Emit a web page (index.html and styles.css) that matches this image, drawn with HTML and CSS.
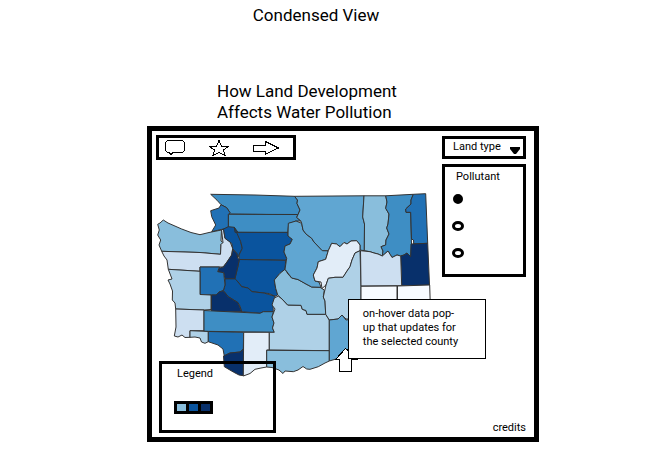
FILE: index.html
```html
<!DOCTYPE html>
<html lang="en">
<head>
<meta charset="utf-8">
<title>Condensed View</title>
<link rel="stylesheet" href="styles.css">
</head>
<body>
<header class="page-title">Condensed View</header>
<main class="page">
  <h1 class="heading">How Land Development<br>Affects Water Pollution</h1>
  <section class="frame">
    <div class="main">
      <nav class="toolbar">
        <button class="tool" type="button" aria-label="Comment"><svg width="20" height="16" viewBox="0 0 20 16"><path d="M2.5.5h15l2 2v8l-2 2H8l-2 2-2-2H2.500l-2-2v-8z"/></svg></button>
        <button class="tool" type="button" aria-label="Favorite"><svg width="20" height="16" viewBox="0 0 20 16"><path d="M10 .5 12.500 6.500H19.500L14.500 10l1.500 5.500-6-3-6 3L5.500 10 .5 6.500h7z"/></svg></button>
        <button class="tool" type="button" aria-label="Share"><svg width="27" height="14" viewBox="0 0 27 14"><path d="M.5 4.500h12v-4l13 6.500-13 6v-3H.5z"/></svg></button>
      </nav>
      <div class="map-area">
        <svg class="map" viewBox="156 192 276 186" role="img" aria-label="Counties map">
          <g class="counties">
            <path class="c6" d="M210.700 194.300 255 195l39.500 1.300 3 3.700-.5 3.500 3 6.500-2 4.500-30 0-39.500-.5 1.500-1.300-3.300-5-5.700-3-4-4.500z"/>
            <path class="c6" d="M228.500 214.300 297.700 214.500l-1 3 4 3.500-5 0-2 1-5 1.500-1 9.200-53.200-.4-6.200-5.600z"/>
            <path class="c7" d="M221 204.700 226.700 207.700 230 212.700 228.300 214.500V228L223.300 229 211.700 231.700 215.700 225 211.700 216.700 210.700 210.700 219 208z"/>
            <path class="c4" d="M163.300 220 168 223 181.700 229 191 232.500 200 234.700 209 232.500 221.500 230 221 241 223 242.500 221 244.500 220.500 254.300 200 252.500 161.700 251.300 159 245 160.700 240 157.700 235 159.300 230 157.700 224.300 160 223z"/>
            <path class="c2" d="M161.700 251.300 200 252.500 220.500 254.300 221 244.500 223 242.500 221.500 230 223.500 229 225 238.300 230 241.700 232.700 248.300 231.700 255 227 262 223 267H200V271.300L168.300 269.300 167 260 164 256z"/>
            <path class="c8" d="M223.500 229 228.300 226.700 234.300 227.300 240 235 240.700 241.700 242.300 248.300 239 255 237.700 258 236.700 253.300 232.700 248.700 231.700 243.300 225 238.300z"/>
            <path class="c8" d="M234.300 227.300 235 232.300H287.700L288 236 292.300 239.300 290 244 285 246 284 252 286.700 258.300 285.700 260.300 239.300 259.500 239 255 242.300 248.300 240.700 241.700z"/>
            <path class="c8" d="M239.300 259.500 285.700 260.300 285 269.300 280 273.300 274.300 280 275.700 288.300 277.700 295 275 296.300 269 293.500 264 293 252 291.700 248 288 241.700 286.700 238 282 234 281 235 278 238 266z"/>
            <path class="c8" d="M225 278.700H235L238 282 241.700 286.700 248 288 252 291.700 264 293 275 296.300 273 304 273.300 311.700H263.300L260 313.300 241.700 311.700 240 306 238 302.700 228.300 296.700 223.300 290.700 225 285z"/>
            <path class="c9" d="M232.700 249.300 236.700 253.300 237.700 258 239.300 259.500 238 266 235 278.700H225L223.700 272.700 217.700 271.700 219 268.300 223.500 267 227 262 231.700 255z"/>
            <path class="c7" d="M200 267H219.500L217.700 271.700 223.700 272.700 225 285 223.300 290.700 219 292 216 295H200z"/>
            <path class="c9" d="M223.300 290.700 228.300 296.700 238 302.700 241.700 311.700H211.500V295L216 295 219 292z"/>
            <path class="c3" d="M168.300 269.300 200 271.300V294.500L211 295V309.500L204 310 175.700 309 175 303 172.300 300 172.500 291 170 284 168 280 172 279z"/>
            <path class="c2" d="M175.700 309 204 310V330.700H190V337.300L185 337.500 182 335 178 337 174.300 336 176 327z"/>
            <path class="c6" d="M204 310.500 260 313.300 263.300 311.700H273.500L272 317 274 323 272.500 328 274.300 332.300 204 331.300z"/>
            <path class="c3" d="M190 330.700 208.300 331.500V341.700L205 343.300 201.500 342 200 338 195 337 190 337.300z"/>
            <path class="c7" d="M208.300 331.500 243.700 332.300 243.300 349 240 352 230 353 224.300 356 223 349 218 345 208.300 341.700z"/>
            <path class="c9" d="M243.500 349 243.300 375.700 239 375 233.300 372 224.300 366.700 223.500 356 230 353 240 352z"/>
            <path class="c1" d="M243.700 332.300H269.300V350H266.700V367L261 368 255 369.300 250 373.500 243.300 376z"/>
            <path class="c3" d="M274.300 298 278.300 296 282 299 287.700 305 301 305.300 302.300 309.300 306 310.500 307 314.300H325.700L329.300 320V350.700L269.300 350V332.300H274.300L272.500 328 274 323 272 317 275 309 272 305z"/>
            <path class="c4" d="M266.700 350.300 329.300 350.700V361L325 363 318.300 366.700 310 369.300 306.700 369 303 366.500 298 370 293.300 371.700 285 371 283 373.500 279 370 272 367.500 266.700 367z"/>
            <path class="c4" d="M285 269.300 288 274 291.700 278 298 279.500 306 284 311.700 287 320 287.300 324.300 290 323.300 297 325 301 325.700 314.300H307L306 310.500 302.300 309.300 301 305.300 287.700 305 282 299 277.700 295 275.700 288.300 274.300 280 280 273.300z"/>
            <path class="c5" d="M288.300 223.300 296 221 301.700 223.300 303 230 306 234 311.700 238.300 314 242 322.300 250.500 328.300 250.700 325.700 259.300 318.300 261.700 317 268 313.300 275 315 281 319 282 321 287.300 311.700 287 306 284 298 279.500 291.700 278 285 269.300 286.700 258.300 284 252 285 246 290 244 292.300 239.300 288 236z"/>
            <path class="c5" d="M294.500 196.300 364 195.800 362.700 217 364.500 224 364.300 250.700 360 250 360 245 356.700 240.700 351 241 347 244 344 242.500 340 246.700 336.500 244 331.700 243.300 328.300 250.700H322.300L314 242 311.700 238.300 306 234 303 230 301.700 223.300 300.700 220.700 296.700 217.500 300 210 297 203.500 297.500 200z"/>
            <path class="c1" d="M331.700 243.300 336.500 244 340 246.700 344 242.500 347 244 351 241 356.700 240.700 360 245V250.700L355 253 352 260 350 266.700 347 271 343 277.300 335 277.300 328.300 278.300 326 285 322 288.500 321 282 315 281 313.300 275 317 268 318.300 261.700 325.700 259.300 328.300 250.700z"/>
            <path class="c3" d="M360 250.700 361 285 361 312 349 319 346 319 342 315 338 319 329.300 320 325.700 314.300 325 301 323.300 297 326 285 328.300 278.300 335 277.300H343L347 271 350 266.700 352 260 355 253z"/>
            <path class="c5" d="M329.300 320 338 319 342 315 346 320 360 318V350L336 359 329.300 361z"/>
            <path class="c4" d="M364 195.800H385.700L387 202 385.700 208.300 389 214 388 224 386.700 228 389 234 386 240 385.700 245 381 246.700 383 251 382.300 256 378 254 374 253 370 251.700 364.300 250.700 364.500 224 362.700 217z"/>
            <path class="c6" d="M385.700 195.800 413.300 194.300 411 200 411 204 405.700 209 406 212.300H410.700L411.500 244 410.700 256.700 407 253 404 255 400.700 256 397 255 392 257.500 388 251 382.300 256 383 251 381 246.700 385.700 245 386 240 389 234 386.700 228 388 224 389 214 385.700 208.300 387 202z"/>
            <path class="c7" d="M413.300 194.300 425.700 193.700 427.700 243.300 413.700 244 413.500 240 411.500 239 410.700 212.300H406L405.700 209 411 204V200z"/>
            <path class="c9" d="M411 244 427.700 243.300 429.500 285 401.700 285.700 400.700 256 404 255 407 253 410.700 256.700z"/>
            <path class="c2" d="M360.500 250.700 370 251.700 374 253 378 254 382.300 256 388 251 392 257.500 397 255 400.700 256 401.700 285.700 361 286z"/>
            <path class="c0" d="M361 286.300 397 286V312H361z"/>
            <path class="c0" d="M397.500 286 429.700 285 430.500 312H397.500z"/>
          </g>
          <path class="pointer" d="M345.500 348.500 335.500 359.500H339.500V371.500H351.500V359.500H357.500V357z"/>
        </svg>
        <div class="popup" role="tooltip">on-hover data pop-<br>up that updates for<br>the selected county</div>
      </div>
      <aside class="legend">
        <span>Legend</span>
        <div class="swatches"><i class="swatch light"></i><i class="swatch mid"></i><i class="swatch dark"></i></div>
      </aside>
    </div>
    <div class="side">
      <div class="picker">
        <select class="select" aria-label="Land type"><option>Land type</option></select>
        <svg class="caret" width="10" height="7" viewBox="0 0 10 7"><path d="M0 0h10v2L6 7H4L0 2z"/></svg>
      </div>
      <fieldset class="pollutant" aria-labelledby="pollutant-title">
        <span id="pollutant-title">Pollutant</span>
        <input class="radio" type="radio" name="pollutant" aria-label="Pollutant 1" checked>
        <input class="radio" type="radio" name="pollutant" aria-label="Pollutant 2">
        <input class="radio" type="radio" name="pollutant" aria-label="Pollutant 3">
      </fieldset>
      <a class="credits" href="#credits">credits</a>
    </div>
  </section>
</main>
</body>
</html>
```
FILE: styles.css
```css
* { box-sizing: border-box; }

body {
  margin: 0;
  background: #fff;
  color: #000;
  font: 11px/14px Roboto, "Liberation Sans", sans-serif;
}

.page-title {
  padding: 5px 32px 0 0;
  font-size: 17px;
  line-height: 20px;
  text-align: center;
}

.page { padding: 56px 125px 28px 147px; }

.heading {
  margin: 0;
  padding: 0 0 3px 70px;
  font-size: 17px;
  font-weight: 400;
  line-height: 21px;
}

.frame {
  position: relative;
  display: grid;
  grid-template-columns: 1fr 84px;
  column-gap: 10px;
  padding: 4px 8px 2px 4px;
  border: 5px solid #000;
}

.main { padding-bottom: 57px; }

.toolbar {
  display: flex;
  align-items: center;
  gap: 24px;
  width: 140px;
  height: 25px;
  padding: 0 6px;
  border: 3px solid #000;
}

.tool {
  display: flex;
  padding: 0;
  border: 0;
  background: none;
}

.tool path {
  fill: #fff;
  stroke: #000;
  shape-rendering: crispEdges;
}

.map-area {
  position: relative;
  margin-top: 32px;
}

.map { display: block; width: 100%; }

.counties path { stroke: #333; stroke-width: 1; stroke-linejoin: round; }
.c0 { fill: #f7fbff; }
.c1 { fill: #e2edf8; }
.c2 { fill: #cddff1; }
.c3 { fill: #afd1e7; }
.c4 { fill: #89bedc; }
.c5 { fill: #60a6d2; }
.c6 { fill: #3e8ec4; }
.c7 { fill: #2171b5; }
.c8 { fill: #0a549e; }
.c9 { fill: #08306b; }

.pointer { fill: #fff; stroke: #000; shape-rendering: crispEdges; }

.popup {
  position: absolute;
  top: 57.5%;
  left: 69.5%;
  width: 138px;
  padding: 7px 14px 9px;
  border: 1px solid #000;
  background: #fff;
  white-space: nowrap;
}

.legend {
  position: absolute;
  bottom: 4px;
  left: 7px;
  width: 117px;
  height: 72px;
  padding: 3px 12px;
  border: 3px solid #000;
}

.legend span { display: block; padding-left: 3px; }

.swatches {
  display: inline-flex;
  gap: 3px;
  margin-top: 20px;
  padding: 3px;
  background: #000;
}

.swatch { width: 9px; height: 7px; }
.light { background: #89bedc; }
.mid { background: #0a549e; }
.dark { background: #08306b; }

.side {
  display: flex;
  flex-direction: column;
  gap: 5px;
  padding-top: 1px;
}

.picker { position: relative; }

.select {
  display: block;
  appearance: none;
  width: 100%;
  height: 23px;
  padding: 0 8px 2px;
  border: 3px solid #000;
  border-radius: 0;
  background: #fff;
  color: #000;
  font: inherit;
}

.caret {
  position: absolute;
  right: 6px;
  bottom: 5px;
  pointer-events: none;
}

.pollutant {
  display: flex;
  flex-direction: column;
  gap: 17px;
  min-width: 0;
  height: 113px;
  margin: 0;
  padding: 3px 7px;
  border: 3px solid #000;
}

.pollutant span { padding-left: 4px; margin-bottom: -7px; }

.radio {
  appearance: none;
  flex: none;
  width: 12px;
  height: 10px;
  margin: 0;
  border: 3px solid #000;
  border-radius: 50%;
}

.radio:checked {
  width: 10px;
  margin-left: 1px;
  background: #000;
}

.credits {
  margin-top: auto;
  color: #000;
  text-align: right;
  text-decoration: none;
}
```
